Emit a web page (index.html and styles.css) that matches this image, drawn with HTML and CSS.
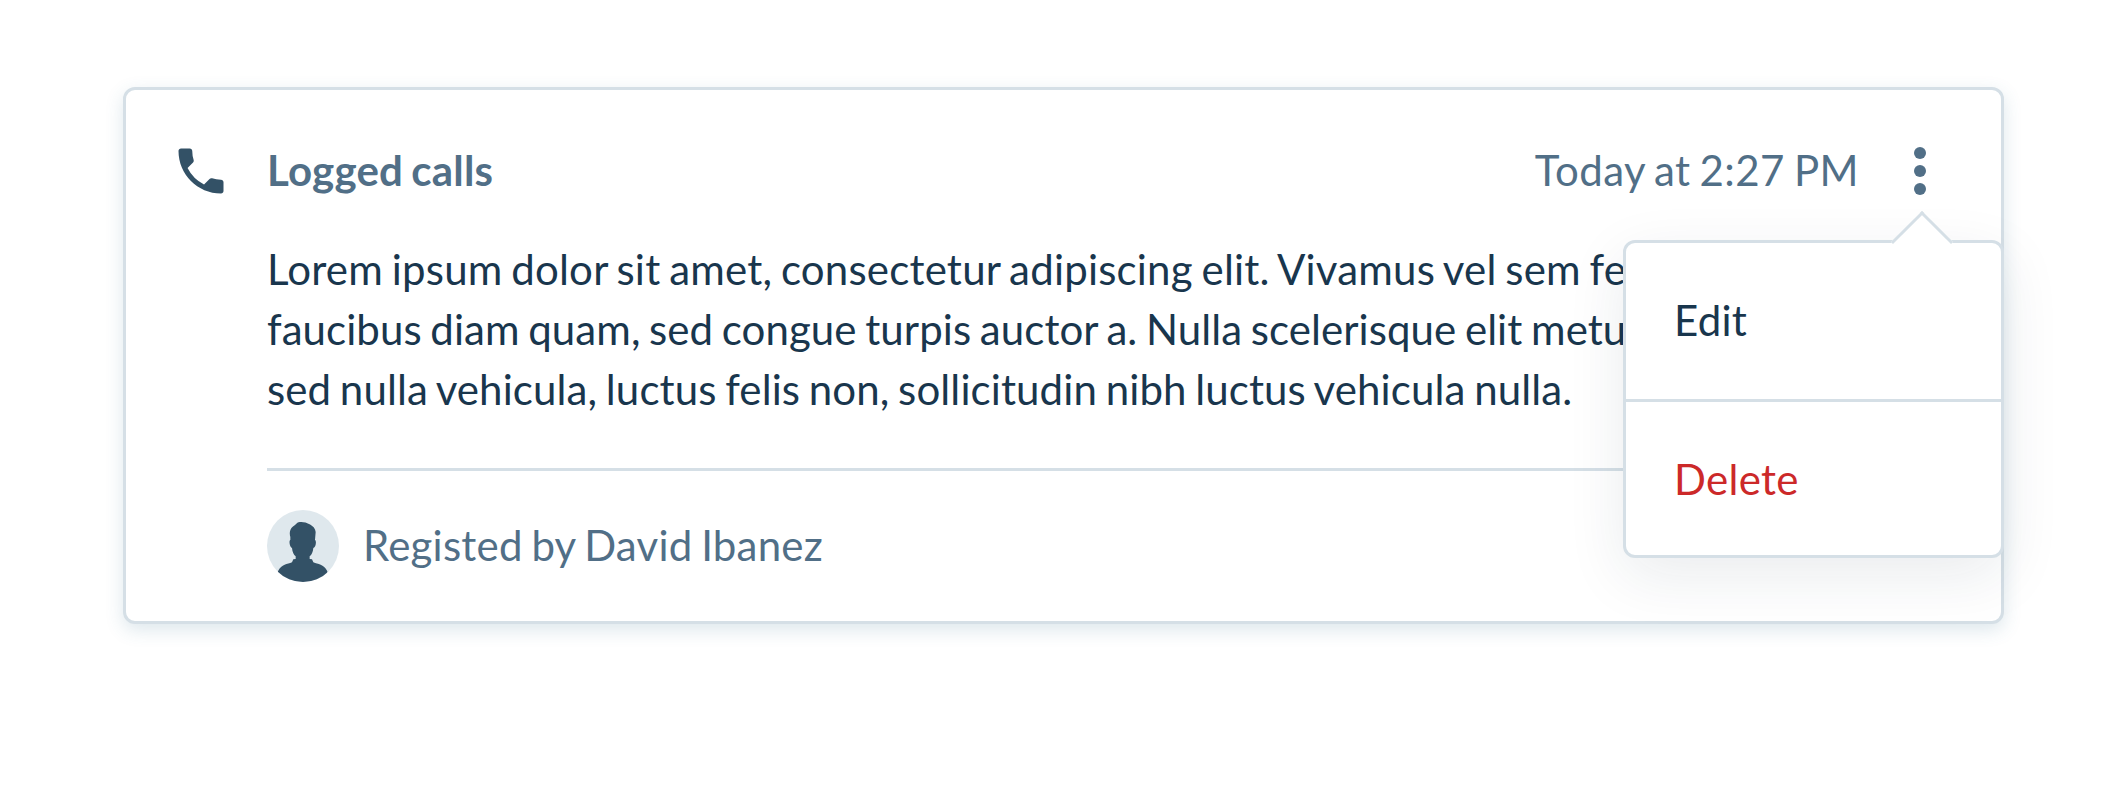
FILE: index.html
```html
<!DOCTYPE html>
<html lang="en">
<head>
<meta charset="utf-8">
<title>Logged calls</title>
<link rel="stylesheet" href="styles.css">
</head>
<body>
<article class="card">
  <svg class="phone" viewBox="0 0 24 24" aria-hidden="true"><path d="M20 15.5c-1.250 0-2.450-.2-3.570-.57a1.020 1.020 0 0 0-1.020.24l-2.200 2.200a15.045 15.045 0 0 1-6.590-6.590l2.200-2.210a.96.96 0 0 0 .25-1A11.360 11.360 0 0 1 8.500 4c0-.55-.45-1-1-1H4c-.55 0-1 .45-1 1 0 9.390 7.610 17 17 17 .55 0 1-.45 1-1v-3.500c0-.55-.45-1-1-1z"/></svg>
  <div class="content">
    <header class="head">
      <h2 class="title">Logged calls</h2>
      <time class="date">Today at 2:27 PM</time>
      <div class="more">
        <i class="dot"></i><i class="dot"></i><i class="dot"></i>
      </div>
    </header>
    <p class="body">
      <span class="line line-first">Lorem ipsum dolor sit amet, consectetur adipiscing elit. Vivamus vel sem fe</span>
      <span class="line line-second">faucibus diam quam, sed congue turpis auctor a. Nulla scelerisque elit metu</span>
      <span class="line line-third">sed nulla vehicula, luctus felis non, sollicitudin nibh luctus vehicula nulla.</span>
    </p>
    <footer class="foot">
      <svg class="avatar" viewBox="0 0 216 216" aria-hidden="true">
        <defs><clipPath id="disc"><circle cx="108" cy="108" r="108"/></clipPath></defs>
        <circle class="avatar-bg" cx="108" cy="108" r="108"/>
        <path class="avatar-fg" clip-path="url(#disc)" d="M103 36c14 0 42 10 43 30l-2 24c5 2 3 22-5 24-1 12-5 20-11 25v8l7 1 4 9c14 6 31 5 42 27v35H33v-35c11-22 28-21 42-27l4-9 7-1v-8c-6-5-10-13-11-25-7-2-10-22-5-24l0-9c-3-9-2-20 4-28 5-6 12-9 14-12 4-4 9-5 14-5z"/>
      </svg>
      <span class="author">Registed by David Ibanez</span>
    </footer>
  </div>
  <div class="menu">
    <i class="arrow"></i>
    <a class="item">Edit</a>
    <a class="item danger">Delete</a>
  </div>
</article>
</body>
</html>
```
FILE: styles.css
```css
* { box-sizing: border-box; }
body {
  margin: 0;
  padding: 87px 123px;
  background: #fff;
  font: 42px/60px Lato, sans-serif;
  word-spacing: -2.2px;
  color: #516f87;
}
.card {
  position: relative;
  display: flex;
  width: 1881px;
  height: 537px;
  padding: 50px 45px 0;
  border: 3px solid #d5dfe6;
  border-radius: 12px;
  background: #fff;
  box-shadow: 0 6px 18px rgba(51, 110, 140, .17);
}
.phone { width: 60px; height: 60px; margin: 1px 36px 0 0; fill: #335166; }
.content { flex: 1; }
.head { display: flex; align-items: center; height: 60px; }
.title { margin: 0; font-size: 42px; font-weight: 700; letter-spacing: .2px; }
.date { margin-left: auto; letter-spacing: .44px; }
.more {
  display: flex;
  flex-direction: column;
  gap: 6px;
  margin: 2px 30px 0 55px;
}
.dot { width: 12px; height: 12px; border-radius: 50%; background: #516f87; }
.body { margin: 39px 0 0; color: #19364d; white-space: nowrap; }
.line { display: block; }
.line-first { letter-spacing: .2px; }
.line-second { letter-spacing: .07px; }
.line-third { letter-spacing: .11px; }
.foot {
  display: flex;
  align-items: center;
  gap: 24px;
  margin-top: 49px;
  padding-top: 39px;
  border-top: 3px solid #d5dfe6;
}
.avatar { width: 72px; height: 72px; }
.avatar-bg { fill: #dfe8ed; }
.avatar-fg { fill: #335166; }
.author { margin-bottom: 2px; letter-spacing: .22px; }
.menu {
  position: absolute;
  top: 150px;
  right: -3px;
  width: 381px;
  height: 318px;
  border: 3px solid #d5dfe6;
  border-radius: 12px;
  background: #fff;
  box-shadow: 0 18px 60px rgba(25, 40, 65, .09);
}
.arrow {
  position: absolute;
  top: -23px;
  left: 274px;
  width: 44px;
  height: 44px;
  border: solid #d5dfe6;
  border-width: 3px 0 0 3px;
  background: #fff;
  transform: rotate(45deg);
}
.item {
  display: flex;
  align-items: center;
  height: 156px;
  padding: 0 0 2px 48px;
  letter-spacing: .3px;
  color: #19364d;
}
.item.danger { padding-bottom: 0; border-top: 3px solid #d5dfe6; color: #cc2929; }
```
